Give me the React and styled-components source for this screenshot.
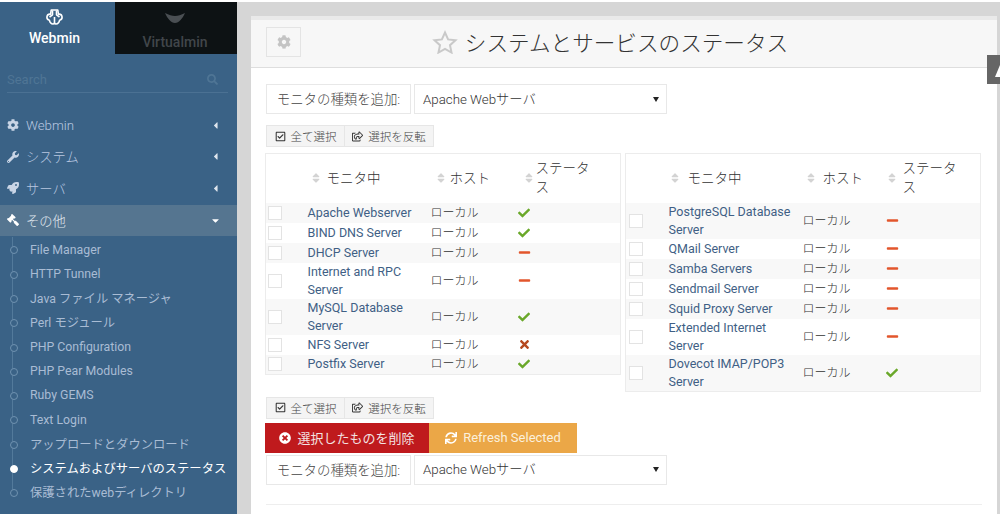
import styled, { createGlobalStyle } from "styled-components";
import {
  FaCog,
  FaWrench,
  FaRocket,
  FaGavel,
  FaSearch,
  FaCaretLeft,
  FaCaretDown,
  FaSort,
  FaRegCheckSquare,
  FaRegShareSquare,
  FaTimesCircle,
  FaSync,
  FaCheck,
  FaMinus,
  FaTimes
} from "react-icons/fa";

const FONT = `Roboto, "Noto Sans CJK JP", sans-serif`;

const GlobalStyle = createGlobalStyle`
  html, body {
    margin: 0;
    height: 514px;
    overflow: hidden;
    background: #fff;
  }
  body {
    font-family: ${FONT};
    font-size: 13px;
    color: #333;
  }
  * {
    box-sizing: border-box;
  }
`;

const Page = styled.div`
  display: flex;
  height: 514px;
  padding-top: 2px;
`;

const Sidebar = styled.aside`
  flex: 0 0 237px;
  background: #3a6286;
  overflow: hidden;
`;

const Tabs = styled.div`
  display: flex;
  height: 52px;
`;

const Tab = styled.div`
  flex: 0 0 ${(p) => (p.$dark ? "122px" : "115px")};
  background: ${(p) => (p.$dark ? "#0d1214" : "transparent")};
  color: ${(p) => (p.$dark ? "#41464a" : "#fff")};
  display: flex;
  flex-direction: column;
  align-items: center;
  font-size: 14px;
  font-weight: 500;
  padding-top: ${(p) => (p.$dark ? "11px" : "7px")};
  padding-right: ${(p) => (p.$dark ? "2px" : "6px")};
  gap: ${(p) => (p.$dark ? "11px" : "5px")};
  line-height: 16px;
`;

const SearchBox = styled.div`
  display: flex;
  align-items: center;
  justify-content: space-between;
  margin: 16px 9px 0 7px;
  height: 23px;
  padding-right: 10px;
  border-bottom: 1px solid #4b7193;
  color: #4f7595;
  font-size: 13px;
  padding-bottom: 4px;
`;

const MenuList = styled.nav`
  margin-top: 17px;
`;

const MenuItem = styled.div`
  display: flex;
  align-items: center;
  height: 31.6px;
  padding: 0 16px 1px 7px;
  font-size: 13.3px;
  background: ${(p) => (p.$active ? "#557590" : "transparent")};
  color: ${(p) => (p.$active ? "#e3eaf0" : "#b8c7e0")};
  svg:first-child {
    width: 12px;
    height: 12px;
    margin-right: 7px;
    color: ${(p) => (p.$active ? "#fff" : "#c9d5e6")};
    transform: ${(p) => (p.$active ? "scaleX(-1)" : "none")};
  }
`;

const MenuLabel = styled.span`
  flex: 1;
  font-weight: 300;
`;

const SubList = styled.ul`
  list-style: none;
  margin: 1px 0 0;
  padding: 0;
  position: relative;
  &::before {
    content: "";
    position: absolute;
    left: 12px;
    top: 0;
    bottom: 10px;
    width: 1px;
    background: #537a9b;
  }
`;

const SubItem = styled.li`
  position: relative;
  display: flex;
  align-items: center;
  height: 24.3px;
  padding-left: 30px;
  font-size: 12.3px;
  white-space: nowrap;
  color: ${(p) => (p.$current ? "#fff" : "#a9bcd4")};
  &::before {
    content: "";
    position: absolute;
    left: 10px;
    top: 9px;
    width: 6px;
    height: 6px;
    border-radius: 50%;
    background: ${(p) => (p.$current ? "#fff" : "#3a6286")};
    border: 1px solid ${(p) => (p.$current ? "#fff" : "#6f92b0")};
  }
`;

const Main = styled.main`
  flex: 1;
  background: #d6d6d6;
  padding: 14px 3px 0 14px;
  position: relative;
  min-width: 0;
`;

const Panel = styled.section`
  background: #fff;
  height: 100%;
  border-top: 4px solid #e9e9e9;
  overflow: hidden;
`;

const PanelHead = styled.header`
  display: flex;
  align-items: center;
  justify-content: center;
  position: relative;
  height: 48px;
  padding: 0 28px 4px 0;
  background: #f7f7f7;
  border-bottom: 1px solid #dedede;
`;

const ConfigButton = styled.div`
  position: absolute;
  left: 15px;
  top: 7px;
  width: 35px;
  height: 30px;
  display: flex;
  align-items: center;
  justify-content: center;
  border: 1px solid #e4e4e4;
  color: #c4c4c4;
  font-size: 14px;
`;

const Title = styled.h1`
  display: flex;
  align-items: center;
  gap: 7px;
  margin: 0;
  font-size: 21.6px;
  font-weight: 300;
  color: #333;
`;

const Body = styled.div`
  padding: 16px 15px 0 14px;
`;

const AddRow = styled.div`
  display: flex;
  gap: 3px;
  height: 30px;
  margin: ${(p) => (p.$bottom ? "2px 0 0 1px" : "0 0 0 1px")};
`;

const AddLabel = styled.div`
  width: 145px;
  display: flex;
  align-items: center;
  justify-content: center;
  padding-bottom: 2px;
  border: 1px solid #e8e8e8;
  font-size: 13.4px;
  font-weight: 300;
  color: #444;
`;

const SelectBox = styled.div`
  width: 253px;
  display: flex;
  align-items: center;
  justify-content: space-between;
  padding: 0 7px 2px 8px;
  border: 1px solid #e8e8e8;
  font-size: 13.3px;
  color: #333;
  font-weight: 300;
`;

const SelectArrow = styled.span`
  width: 0;
  height: 0;
  margin-top: 2px;
  border-left: 3px solid transparent;
  border-right: 3px solid transparent;
  border-top: 5px solid #222;
`;

const BtnGroup = styled.div`
  display: flex;
  width: 168px;
  height: 22px;
  margin: ${(p) => p.$margin};
  border: 1px solid #e6e6e6;
  background: #f4f4f4;
`;

const SmallBtn = styled.div`
  flex: ${(p) => (p.$wide ? "1" : "0 0 77px")};
  display: flex;
  align-items: center;
  justify-content: center;
  gap: 5px;
  font-size: 11.5px;
  font-weight: 300;
  color: #444;
  & + & {
    border-left: 1px solid #e6e6e6;
  }
  svg {
    font-size: 11px;
    color: #333;
  }
`;

const Tables = styled.div`
  display: flex;
  align-items: flex-start;
  gap: 4px;
  margin-top: 6px;
`;

const Monitor = styled.table`
  width: 356px;
  table-layout: fixed;
  border-collapse: collapse;
  border: 1px solid #ececec;
  font-size: 12.5px;
`;

const Th = styled.th`
  height: 49px;
  width: ${(p) => (p.$w ? `${p.$w}px` : "auto")};
  padding: 0 0 0 ${(p) => p.$pad || 0}px;
  text-align: left;
  font-size: 13.5px;
  line-height: 19.5px;
  font-weight: 300;
  color: #333;
`;

const HeadInner = styled.span`
  display: flex;
  align-items: center;
  gap: ${(p) => p.$gap}px;
  max-width: 80px;
  svg {
    flex: none;
    color: #d3d3d3;
    font-size: 12px;
  }
`;

const HeadText = styled.span`
  max-width: 60px;
`;

const Tr = styled.tr`
  background: ${(p) => (p.$odd ? "#f8f8f8" : "#fff")};
`;

const Td = styled.td`
  padding: 0 0 0 ${(p) => p.$pad || 0}px;
  height: 20px;
  line-height: 18px;
  vertical-align: middle;
`;

const Check = styled.span`
  display: block;
  width: 14px;
  height: 14px;
  background: #fff;
  border: 1px solid #e3e3e3;
`;

const MonitorLink = styled.a`
  color: #3f5f85;
  display: block;
`;

const Host = styled.span`
  font-size: 12px;
  font-weight: 300;
  color: #333;
`;

const StatusCell = styled.span`
  display: flex;
  align-items: center;
  padding-left: 1px;
  color: ${(p) => p.$color};
  font-size: ${(p) => p.$size}px;
`;

const Actions = styled.div`
  display: flex;
  height: 30px;
  margin-top: 4px;
`;

const ActionBtn = styled.div`
  display: flex;
  align-items: center;
  justify-content: center;
  gap: 6px;
  width: ${(p) => p.$w}px;
  background: ${(p) => p.$bg};
  color: ${(p) => p.$fg};
  font-size: 13px;
  svg {
    color: #fff;
    font-size: 12px;
  }
`;

const Rule = styled.hr`
  border: 0;
  border-top: 1px solid #eee;
  margin: 19px 0 0 1px;
`;

const TopTab = styled.div`
  position: absolute;
  right: 0;
  top: 53px;
  width: 13px;
  height: 29px;
  background: #666;
`;

const WebminLogo = () => (
  <svg width="17" height="16" viewBox="0 0 17 16" fill="none" stroke="#fff" strokeWidth="1.6" strokeLinejoin="round">
    <path d="M5.200 1h6.600l.6 4.200c1.700-.2 3.300.7 3.600 2.400.3 1.800-.9 3.300-2.400 3.600-.4 2-1.700 3.800-3.600 3.800-.8 0-1.300-.4-1.500-.9-.2.500-.7.900-1.500.9-1.900 0-3.200-1.800-3.600-3.800C1.900 10.900.700 9.400 1 7.600c.3-1.700 1.900-2.600 3.600-2.400z" />
    <path d="M6.500 1.500v4.300L3.500 8M10.500 1.500v4.300l3 2.200M8.500 8v6" />
  </svg>
);

const VirtualminMark = () => (
  <svg width="20" height="10" viewBox="0 0 20 10" fill="#4a4f53">
    <path d="M0 0c4 2 7 3 10 3s6-1 10-3c-2.500 5.500-6 10-10 10S2.500 5.500 0 0z" />
  </svg>
);

const StarOutline = () => (
  <svg width="26" height="24" viewBox="0 0 26 24" fill="none" stroke="#c9c9c9" strokeWidth="2" strokeLinejoin="miter">
    <path d="M13 2.500l3.100 6.900 7.400.8-5.500 5 1.500 7.300L13 18.800l-6.500 3.700 1.500-7.300-5.500-5 7.400-.8z" />
  </svg>
);

const TabGlyph = () => (
  <svg width="13" height="29" viewBox="0 0 13 29" fill="#fff">
    <path d="M8 22 13 10v12z" />
  </svg>
);

const MENU = [
  { label: "Webmin", Icon: FaCog },
  { label: "システム", Icon: FaWrench },
  { label: "サーバ", Icon: FaRocket },
  { label: "その他", Icon: FaGavel, active: true }
];

const SUBMENU = [
  "File Manager",
  "HTTP Tunnel",
  "Java ファイル マネージャ",
  "Perl モジュール",
  "PHP Configuration",
  "PHP Pear Modules",
  "Ruby GEMS",
  "Text Login",
  "アップロードとダウンロード",
  "システムおよびサーバのステータス",
  "保護されたwebディレクトリ"
];

const LEFT_ROWS = [
  ["Apache Webserver", "ok"],
  ["BIND DNS Server", "ok"],
  ["DHCP Server", "off"],
  ["Internet and RPC Server", "off"],
  ["MySQL Database Server", "ok"],
  ["NFS Server", "down"],
  ["Postfix Server", "ok"]
];

const RIGHT_ROWS = [
  ["PostgreSQL Database Server", "off"],
  ["QMail Server", "off"],
  ["Samba Servers", "off"],
  ["Sendmail Server", "off"],
  ["Squid Proxy Server", "off"],
  ["Extended Internet Server", "off"],
  ["Dovecot IMAP/POP3 Server", "ok"]
];

const LEFT_COLS = {
  check: 42,
  name: 118,
  host: 91,
  checkPad: 2,
  namePad: 2,
  nameGap: 5,
  hostHead: 9,
  hostGap: 3,
  hostPad: 5,
  statusHead: 6,
  statusGap: 1
};
const RIGHT_COLS = {
  check: 43,
  name: 133,
  host: 83,
  checkPad: 3,
  namePad: 0,
  nameGap: 7,
  hostHead: 3,
  hostGap: 6,
  hostPad: 1,
  statusHead: 1,
  statusGap: 5
};

function Status({ kind }) {
  if (kind === "ok") {
    return (
      <StatusCell $color="#6aa82a" $size={12}>
        <FaCheck />
      </StatusCell>
    );
  }
  if (kind === "off") {
    return (
      <StatusCell $color="#e2562c" $size={13}>
        <FaMinus />
      </StatusCell>
    );
  }
  return (
    <StatusCell $color="#b5481f" $size={13}>
      <FaTimes />
    </StatusCell>
  );
}

function SortHead({ gap, children }) {
  return (
    <HeadInner $gap={gap}>
      <FaSort />
      <HeadText>{children}</HeadText>
    </HeadInner>
  );
}

function MonitorTable({ rows, cols }) {
  return (
    <Monitor>
      <thead>
        <tr>
          <Th $w={cols.check} />
          <Th $w={cols.name} $pad={cols.namePad}>
            <SortHead gap={cols.nameGap}>モニタ中</SortHead>
          </Th>
          <Th $w={cols.host} $pad={cols.hostHead}>
            <SortHead gap={cols.hostGap}>ホスト</SortHead>
          </Th>
          <Th $pad={cols.statusHead}>
            <SortHead gap={cols.statusGap}>ステータス</SortHead>
          </Th>
        </tr>
      </thead>
      <tbody>
        {rows.map(([name, status], i) => (
          <Tr key={name} $odd={i % 2 === 0}>
            <Td $pad={cols.checkPad}>
              <Check />
            </Td>
            <Td>
              <MonitorLink>{name}</MonitorLink>
            </Td>
            <Td $pad={cols.hostPad}>
              <Host>ローカル</Host>
            </Td>
            <Td>
              <Status kind={status} />
            </Td>
          </Tr>
        ))}
      </tbody>
    </Monitor>
  );
}

function AddMonitor({ bottom }) {
  return (
    <AddRow $bottom={bottom}>
      <AddLabel>モニタの種類を追加:</AddLabel>
      <SelectBox>
        Apache Webサーバ
        <SelectArrow />
      </SelectBox>
    </AddRow>
  );
}

function SelectButtons({ margin }) {
  return (
    <BtnGroup $margin={margin}>
      <SmallBtn>
        <FaRegCheckSquare />
        全て選択
      </SmallBtn>
      <SmallBtn $wide>
        <FaRegShareSquare />
        選択を反転
      </SmallBtn>
    </BtnGroup>
  );
}

export default function App() {
  return (
    <Page>
      <GlobalStyle />
      <Sidebar>
        <Tabs>
          <Tab>
            <WebminLogo />
            Webmin
          </Tab>
          <Tab $dark>
            <VirtualminMark />
            Virtualmin
          </Tab>
        </Tabs>
        <SearchBox>
          Search
          <FaSearch size={11} />
        </SearchBox>
        <MenuList>
          {MENU.map(({ label, Icon, active }) => (
            <MenuItem key={label} $active={active}>
              <Icon />
              <MenuLabel>{label}</MenuLabel>
              {active ? <FaCaretDown size={11} color="#fff" /> : <FaCaretLeft size={11} color="#dfe6ee" />}
            </MenuItem>
          ))}
        </MenuList>
        <SubList>
          {SUBMENU.map((item, i) => (
            <SubItem key={item} $current={i === 9}>
              {item}
            </SubItem>
          ))}
        </SubList>
      </Sidebar>
      <Main>
        <Panel>
          <PanelHead>
            <ConfigButton>
              <FaCog />
            </ConfigButton>
            <Title>
              <StarOutline />
              システムとサービスのステータス
            </Title>
          </PanelHead>
          <Body>
            <AddMonitor />
            <SelectButtons margin="11px 0 0 1px" />
            <Tables>
              <MonitorTable rows={LEFT_ROWS} cols={LEFT_COLS} />
              <MonitorTable rows={RIGHT_ROWS} cols={RIGHT_COLS} />
            </Tables>
            <SelectButtons margin="5px 0 0 1px" />
            <Actions>
              <ActionBtn $w={164} $bg="#bf1a1d" $fg="#f3e3e3">
                <FaTimesCircle />
                選択したものを削除
              </ActionBtn>
              <ActionBtn $w={148} $bg="#eba747" $fg="#fbf0dc">
                <FaSync />
                Refresh Selected
              </ActionBtn>
            </Actions>
            <AddMonitor bottom />
            <Rule />
          </Body>
        </Panel>
        <TopTab>
          <TabGlyph />
        </TopTab>
      </Main>
    </Page>
  );
}
